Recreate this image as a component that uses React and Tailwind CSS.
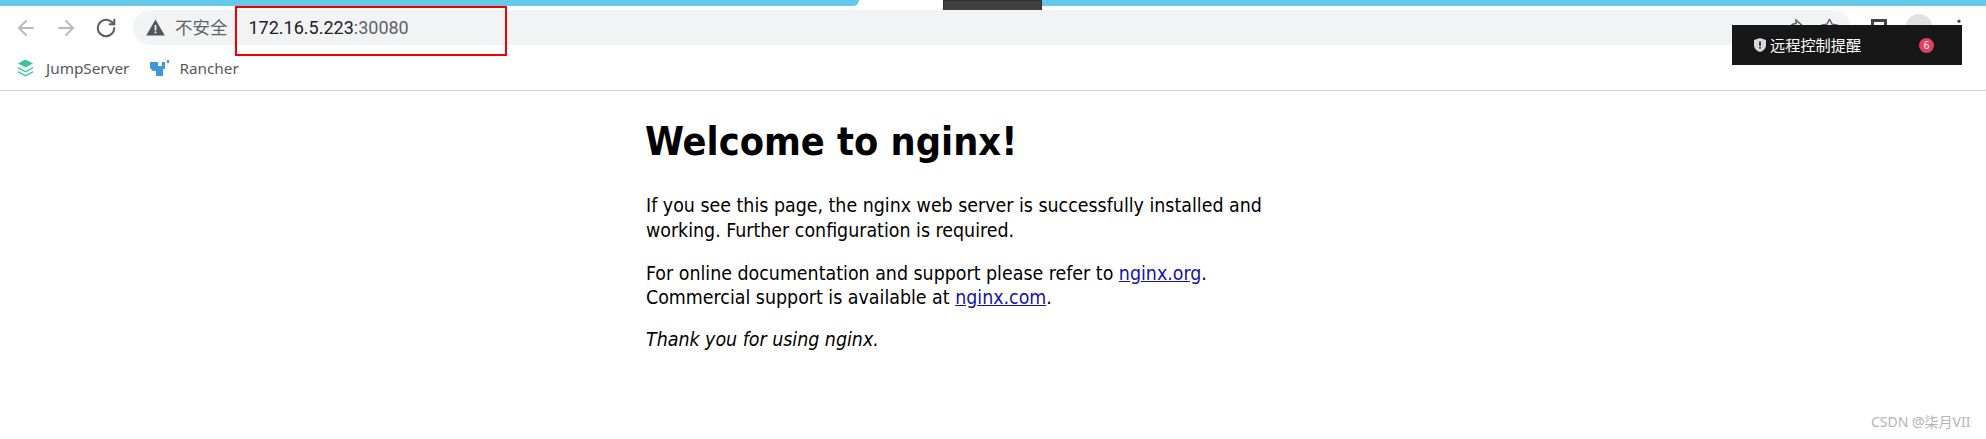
import React from "react";
import { ArrowLeft, ArrowRight, RotateCw, Star, MoreVertical } from "lucide-react";

const cjk = "font-['Noto_Sans','Noto_Sans_CJK_SC',sans-serif]";

function Welcome() {
  return (
    <main className="w-[694px] mx-auto pt-[29px] font-['DejaVu_Sans',sans-serif] text-black">
      <h1 className="text-[39.3px] leading-[44px] font-bold [font-stretch:condensed] -ml-[1px] mb-[30px]">Welcome to nginx!</h1>
      <p className="text-[19.4px] leading-[24.5px] [font-stretch:condensed] mb-[18.5px]">
        If you see this page, the nginx web server is successfully installed and<br />
        working. Further configuration is required.
      </p>
      <p className="text-[19.4px] leading-[24.5px] [font-stretch:condensed] mb-[17.5px]">
        For online documentation and support please refer to <a className="text-[#1212a8] underline" href="#org">nginx.org</a>.<br />
        Commercial support is available at <a className="text-[#1212a8] underline" href="#com">nginx.com</a>.
      </p>
      <p className="text-[19.4px] leading-[24.5px] [font-stretch:condensed] italic">Thank you for using nginx.</p>
    </main>
  );
}

export default function App() {
  return (
    <div className="relative w-full h-[439px] bg-white overflow-hidden">
      {/* tab strip */}
      <div className="flex h-[6px] items-start">
        <div className="w-[859px] h-[6px] bg-[#65c9ea] rounded-br-[6px]"></div>
        <div className="w-[84px] h-[6px]"></div>
        <div className="w-[99px] h-[12px] bg-[#404040] border border-[#333]"></div>
        <div className="flex-1 h-[6px] bg-[#65c9ea]"></div>
      </div>

      {/* toolbar */}
      <div className="flex items-center h-[35px] mt-[4px] pl-[14px] pr-[14px]">
        <ArrowLeft size={24} strokeWidth={2} className="text-[#b9bbbe] shrink-0" />
        <ArrowRight size={24} strokeWidth={2} className="text-[#b9bbbe] shrink-0 ml-[16px]" />
        <RotateCw size={22} strokeWidth={2.2} className="text-[#5a5c5f] shrink-0 ml-[17px]" />
        <div className={`flex items-center h-[35px] w-[1718px] ml-[16px] pl-[13px] rounded-l-[18px] rounded-r-[18px] bg-[#f1f3f4] shrink-0 ${cjk}`}>
          <svg width="19" height="17" viewBox="0 0 19 17" className="shrink-0">
            <path d="M9.5 0.5 L18.8 16.5 H0.2 Z" fill="#54575a" />
            <rect x="8.6" y="6" width="1.8" height="5.5" fill="#f1f3f4" />
            <rect x="8.6" y="12.5" width="1.8" height="1.8" fill="#f1f3f4" />
          </svg>
          <span className="ml-[10px] text-[17.5px] text-[#5f6368]">不安全</span>
          <span className="ml-[21px] text-[18px] text-[#202124] font-['Roboto',sans-serif]">
            172.16.5.223<span className="text-[#5f6368]">:30080</span>
          </span>
        </div>
      </div>

      {/* right side toolbar icons, mostly under the popup */}
      <div className="absolute top-[14px] left-[1785px] flex items-center">
        <svg width="20" height="20" viewBox="0 0 20 20" fill="none" stroke="#5f6368" strokeWidth="1.6">
          <path d="M11 3 L17 8.5 L11 14 V10.5 C7 10.5 4.5 12 3 15 C3.5 10 6 7 11 6.5 Z" />
        </svg>
        <Star size={19} strokeWidth={1.8} className="text-[#5f6368] ml-[15px]" />
        <div className="w-[16px] h-[17px] ml-[32px] border-[3px] border-[#444]"></div>
        <div className="w-[26px] h-[26px] ml-[19px] rounded-full bg-[#dfe1e5]"></div>
        <MoreVertical size={20} className="text-[#444] ml-[17px]" />
      </div>

      {/* bookmarks */}
      <div className={`flex items-center h-[45px] mt-[1px] pl-[17px] border-b-[1px] border-[#d3d4d6] text-[15.3px] text-[#55585c] ${cjk}`}>
        <svg width="17" height="18" viewBox="0 0 17 18" className="shrink-0">
          <path d="M8.5 0.5 L16 4.5 L8.5 8.5 L1 4.5 Z" fill="#35c6a0" />
          <path d="M1 8 L8.5 12 L16 8 V9.5 L8.5 13.5 L1 9.5 Z" fill="#35c6a0" />
          <path d="M1 12 L8.5 16 L16 12 V13.5 L8.5 17.5 L1 13.5 Z" fill="#35c6a0" />
        </svg>
        <span className="ml-[12px]">JumpServer</span>
        <svg width="20" height="17" viewBox="0 0 20 17" className="shrink-0 ml-[21px]">
          <path d="M0 2 H8 V6 H12 V2 H15 V9 H13 V16 H6 V11 H3 L0 8 Z" fill="#3d97d8" />
          <path d="M17 0 H19 V3 H17 Z" fill="#3d97d8" />
        </svg>
        <span className="ml-[9px]">Rancher</span>
      </div>

      <Welcome />

      {/* annotation box around the address */}
      <div className="absolute left-[235px] top-[6px] w-[272px] h-[50px] border-2 border-[#f00000]"></div>

      {/* remote control popup */}
      <div className={`absolute left-[1732px] top-[25px] w-[230px] h-[40px] bg-[#171717] flex items-center pl-[22px] text-[15.2px] text-white ${cjk}`}>
        <svg width="12" height="14" viewBox="0 0 12 14" className="shrink-0">
          <path d="M6 0 L12 2 V7 C12 10.5 9.5 12.8 6 14 C2.5 12.8 0 10.5 0 7 V2 Z" fill="#d9d9d9" />
          <rect x="5.2" y="3.5" width="1.6" height="4.5" fill="#171717" />
          <rect x="5.2" y="9" width="1.6" height="1.6" fill="#171717" />
        </svg>
        <span className="ml-[4px]">远程控制提醒</span>
        <span className="ml-[58px] w-[15px] h-[15px] rounded-full bg-[#e0415f] text-[10px] leading-[15px] text-center">6</span>
      </div>

      {/* watermark */}
      <div className={`absolute left-[1871px] top-[412px] text-[14px] leading-[20px] text-[#b4b4b4] ${cjk}`}>CSDN @柒月VII</div>
    </div>
  );
}
